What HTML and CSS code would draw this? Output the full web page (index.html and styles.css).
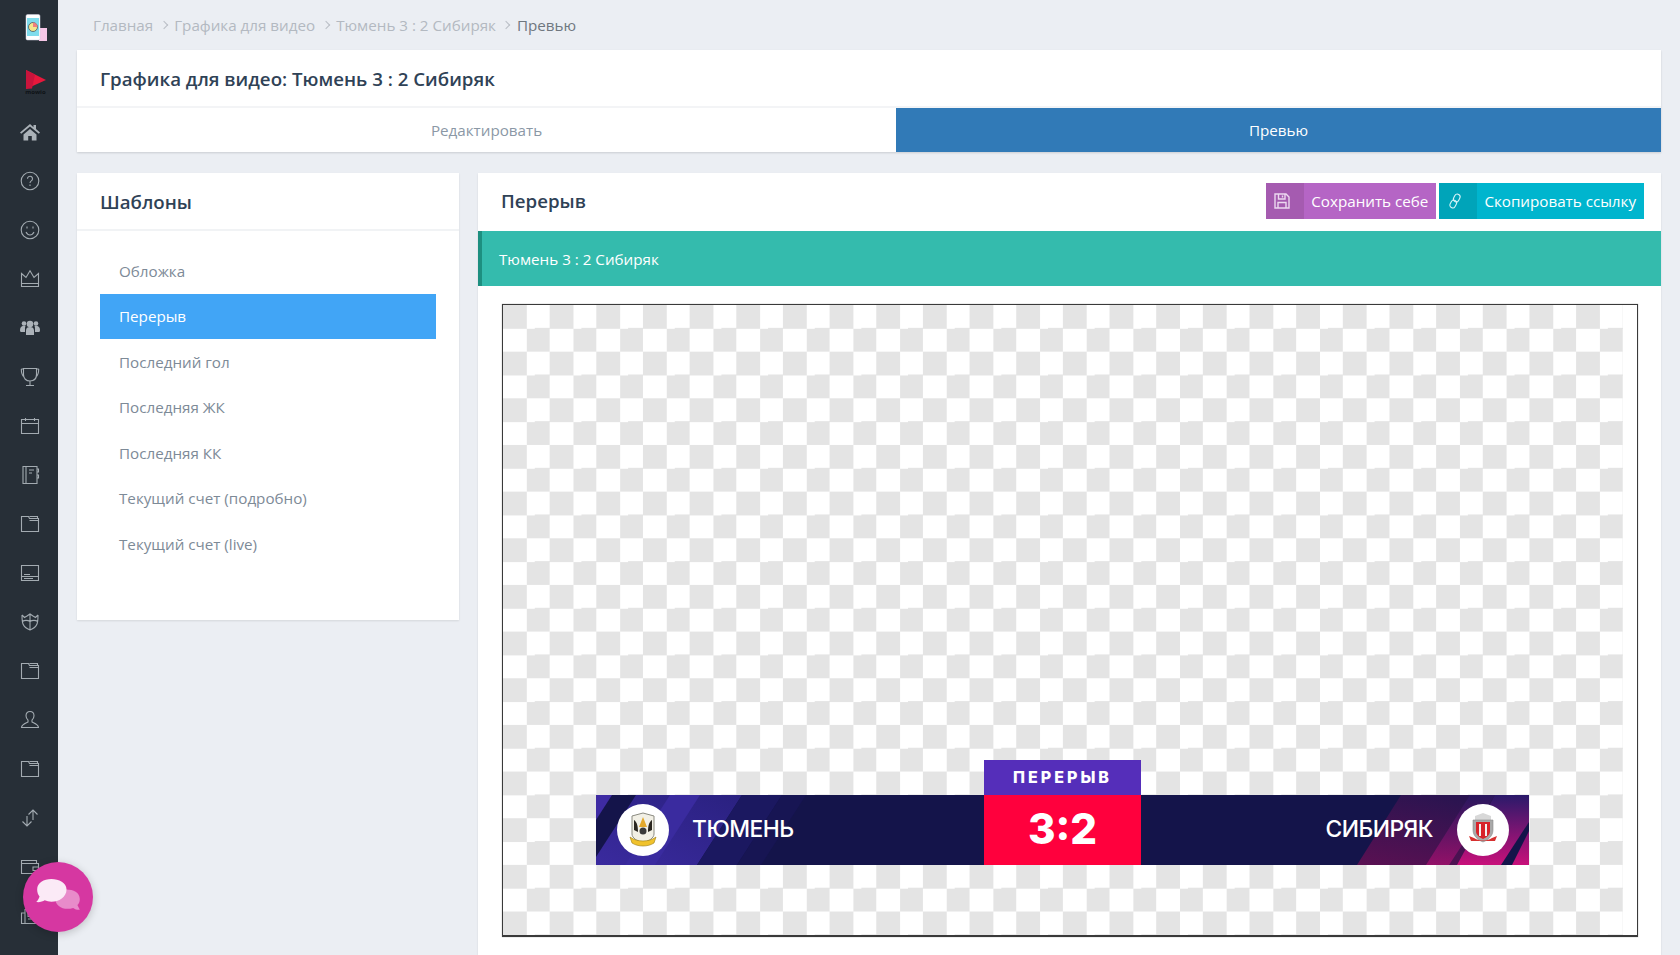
FILE: index.html
```html
<!DOCTYPE html>
<html lang="ru">
<head>
<meta charset="utf-8">
<title>Превью</title>
<link rel="stylesheet" href="styles.css">
</head>
<body>
<svg class="defs" width="0" height="0" aria-hidden="true">
  <symbol id="i-folder" viewBox="0 0 20 20"><path d="M1.500 2.500h7l1 2h9v13h-17zM9.500 2.500h8v2M9.500 6.500h9"/></symbol>
</svg>
<nav class="sidebar">
  <div class="logo-slot">
    <svg class="logo-phone" viewBox="0 0 22 27"><rect x="14" y="14" width="8" height="13" fill="#f5c6e6"/><rect x="1" y="0.500" width="14" height="25.500" rx="1.500" fill="#fff" stroke="#ccd" stroke-width=".5"/><rect x="2" y="4" width="12" height="18" fill="#7fdcec"/><circle cx="8" cy="13" r="4.500" fill="#f4e58c" stroke="#456" stroke-width=".8"/><path d="M8 13V8.500a4.500 4.500 0 0 1 4.500 4.500z" fill="#ef7f7f"/></svg>
  </div>
  <div class="logo-slot logo-mowio">
    <svg class="logo-play" viewBox="0 0 20 19"><path d="M0 0l20 10-20 9z" fill="#e8183c"/><path d="M0 0l9 4.500-3 14-6 .5z" fill="#c9143c"/></svg>
    <span class="mowio-text">mowio</span>
  </div>
  <div class="nav-item"><svg viewBox="0 0 20 20" class="solid"><path d="M10 2L0 10.500l1.200 1.300L10 4.500l8.800 7.300 1.200-1.300-4-3.400V3h-2.500v2.300zM3.500 12.500V18.500h4.700v-4.500h3.600v4.500h4.700v-6L10 7z"/></svg></div>
  <div class="nav-item"><svg viewBox="0 0 20 20"><circle cx="10" cy="10" r="8.800"/><path d="M7.500 7.800a2.500 2.500 0 1 1 3.800 2.100c-.9.6-1.300 1-1.300 2.100M10 13.500v1.500"/></svg></div>
  <div class="nav-item"><svg viewBox="0 0 20 20"><circle cx="10" cy="10" r="8.800"/><path d="M6 12c1 2 2.500 3 4 3s3-1 4-3M7 6.500v2M13 6.500v2"/></svg></div>
  <div class="nav-item"><svg viewBox="0 0 20 20"><path d="M1.500 4.500l4.500 4L10 1.800l4 6.700 4.500-4v13h-17zM1.500 14.500h17"/></svg></div>
  <div class="nav-item"><svg viewBox="0 0 20 20" class="solid"><circle cx="4" cy="5.500" r="2.300"/><circle cx="16" cy="5.500" r="2.300"/><circle cx="10" cy="6" r="3.300"/><path d="M0 12c0-3 2-4.300 4-4.300.6 0 1 .1 1.500.3C5 9 5 10 5 11.500V14H1c-.7 0-1-.8-1-2zM20 12c0-3-2-4.300-4-4.300-.6 0-1 .1-1.500.3.500 1 .5 2 .5 3.500V14h4c.7 0 1-.8 1-2zM6 12.500c0-2.500 1.500-3.500 4-3.500s4 1 4 3.500V17H6z"/></svg></div>
  <div class="nav-item"><svg viewBox="0 0 20 20"><path d="M3.500 1.500h13v6c0 4-2.500 6.500-6.500 6.500s-6.500-2.500-6.500-6.500zM1.300 2h2.500M16.300 2h2.500M1.300 2c0 4 .7 6.500 3 8M18.700 2c0 4-.7 6.500-3 8M10 14v4M6 18.500h8"/></svg></div>
  <div class="nav-item"><svg viewBox="0 0 20 20"><path d="M1.500 3.500h17v14h-17zM1.500 7.500h17M5.500 2v3M14.500 2v3"/></svg></div>
  <div class="nav-item"><svg viewBox="0 0 20 20"><path d="M3 1.500h14v17H3zM6 1.500v17M9 5h5M9 8h3M17 4h1.500v3H17M17 10h1.500v3H17"/></svg></div>
  <div class="nav-item"><svg><use href="#i-folder"/></svg></div>
  <div class="nav-item"><svg viewBox="0 0 20 20"><path d="M1.500 2.500h17v15h-17zM1.500 13.500h17M4 15.500h9M4 11.500h6"/></svg></div>
  <div class="nav-item"><svg viewBox="0 0 20 20"><path d="M2 3c0 7 0 12 8 15 8-3 8-8 8-15M2 3l2.500 2.500L7 4l3-2 3 2 2.500 1.500L18 3M10 2v16M2.500 9.500C4 8 8 8 10 9.500c2-1.500 6-1.500 7.500 0"/></svg></div>
  <div class="nav-item"><svg><use href="#i-folder"/></svg></div>
  <div class="nav-item"><svg viewBox="0 0 20 20"><path d="M10 1.500c2.500 0 4 1.800 4 4.300 0 2-1 3.400-2 4.400v1.800c2 1 6.500 2.500 6.500 5.500h-17c0-3 4.500-4.500 6.500-5.500v-1.800c-1-1-2-2.400-2-4.400 0-2.500 1.500-4.300 4-4.300z"/></svg></div>
  <div class="nav-item"><svg><use href="#i-folder"/></svg></div>
  <div class="nav-item"><svg viewBox="0 0 20 20"><path d="M7 8v10M2.500 13.500L7 18l4.500-4.500M13 12V2M8.500 6.500L13 2l4.500 4.500"/></svg></div>
  <div class="nav-item"><svg viewBox="0 0 20 20"><path d="M1.500 3.500h15v3h2v10h-17zM1.500 6.500h15M13 10h5.500v3.500H13z"/></svg></div>
  <div class="nav-item"><svg viewBox="0 0 20 20"><path d="M5 3.500h13.500v14H1.500V7H5zM5 7v10M8 6.500h7.500v4H8zM8 13h8"/></svg></div>
</nav>
<button class="chat" type="button" aria-label="Чат">
  <svg viewBox="0 0 46 38"><path d="M20 20c0-6 6-9 12-9 7 0 14 3 14 10 0 3-1 5-2.500 6.500l2.500 5c-2 .3-5-.3-7-2-2 .7-4 1-6 1-7 0-13-4-13-11.500z" fill="#e88bca"/><path d="M1 11C1 4 8 0 16 0s16 4 16 11c0 8-8 13-16 13-2.500 0-5-.5-7-1.500-2 1.500-6 2.300-9 1.800 1.500-1.300 3-3.500 3.500-5.800C2 16.500 1 14 1 11z" fill="#fbeaf6"/></svg>
</button>
<main class="main">
  <ol class="crumbs">
    <li>Главная</li>
    <li class="sep"></li>
    <li>Графика для видео</li>
    <li class="sep"></li>
    <li>Тюмень 3 : 2 Сибиряк</li>
    <li class="sep"></li>
    <li class="current">Превью</li>
  </ol>
  <section class="head-card">
    <h1 class="title">Графика для видео: Тюмень 3 : 2 Сибиряк</h1>
    <div class="tabs">
      <a class="tab">Редактировать</a>
      <a class="tab tab-active">Превью</a>
    </div>
  </section>
  <div class="columns">
    <aside class="card templates">
      <h2 class="card-title templates-title">Шаблоны</h2>
      <ul class="tpl-list">
        <li class="tpl">Обложка</li>
        <li class="tpl tpl-active">Перерыв</li>
        <li class="tpl">Последний гол</li>
        <li class="tpl">Последняя ЖК</li>
        <li class="tpl">Последняя КК</li>
        <li class="tpl">Текущий счет (подробно)</li>
        <li class="tpl">Текущий счет (live)</li>
      </ul>
    </aside>
    <section class="card preview">
      <header class="preview-head">
        <h2 class="card-title">Перерыв</h2>
        <div class="actions">
          <a class="btn btn-purple">
            <span class="btn-icon"><svg viewBox="0 0 16 16"><path d="M1 1h11l3 3v11H1zM4.500 1v5h6.500V1M8.500 2.500v2M4 15V9.500h8V15"/></svg></span>
            <span class="btn-text">Сохранить себе</span>
          </a>
          <a class="btn btn-teal">
            <span class="btn-icon"><svg class="link-icon" viewBox="0 0 16 16"><rect x="7" y="1" width="5.500" height="8" rx="2.750" transform="rotate(28 9.750 5)"/><rect x="3.500" y="7" width="5.500" height="8" rx="2.750" transform="rotate(28 6.250 11)"/></svg></span>
            <span class="btn-text">Скопировать ссылку</span>
          </a>
        </div>
      </header>
      <div class="alert">Тюмень 3 : 2 Сибиряк</div>
      <div class="frame">
        <div class="canvas">
          <div class="label">ПЕРЕРЫВ</div>
          <div class="scorebar">
            <div class="team">
              <svg class="team-bg" viewBox="0 0 388 70" preserveAspectRatio="none">
                <defs>
                  <linearGradient id="lg" x1="0" y1="1" x2="1" y2="0"><stop offset="0" stop-color="#3a2a9e"/><stop offset="1" stop-color="#2a2180"/></linearGradient>
                </defs>
                <path d="M0 0h16L0 25z" fill="#3e2ba3"/>
                <path d="M40 0h106l-45 70H0v-8z" fill="url(#lg)"/>
                <path d="M74 0h30L59 70H29z" fill="#3a2b9f"/>
                <path d="M146 0h40l-45 70h-40z" fill="#1b1860"/>
                <path d="M186 0h24l-45 70h-24z" fill="#171553"/>
              </svg>
              <span class="crest">
                <svg viewBox="0 0 30 36"><path d="M4 4l11-3 11 3v18c0 4-5 7-11 9-6-2-11-5-11-9z" fill="#f2f0e6" stroke="#8a8a80" stroke-width="1"/><path d="M6 8c3 2 4 6 4 12l-4-2zM24 8c-3 2-4 6-4 12l4-2z" fill="#2a2620"/><path d="M15 5l4 10h-8z" fill="#e3a92d"/><circle cx="15" cy="19" r="3.500" fill="#3a3a3a"/><path d="M2 25c4 3 9 4 13 4s9-1 13-4l-2 6c-3 2-7 3-11 3s-8-1-11-3z" fill="#f0c22c" stroke="#9a7a10" stroke-width=".6"/></svg>
              </span>
              <span class="team-name">ТЮМЕНЬ</span>
            </div>
            <div class="score">3:2</div>
            <div class="team team-right">
              <svg class="team-bg" viewBox="0 0 388 70" preserveAspectRatio="none">
                <defs>
                  <linearGradient id="rg" x1="0" y1="1" x2="0.500" y2="0"><stop offset="0" stop-color="#5a1052"/><stop offset="1" stop-color="#2a1450"/></linearGradient>
                  <linearGradient id="rm" x1="0" y1="1" x2="0" y2="0"><stop offset="0" stop-color="#c8107a"/><stop offset="1" stop-color="#2a1a6a"/></linearGradient>
                </defs>
                <path d="M260 0h128v70H216z" fill="url(#rg)"/>
                <path d="M329 0h25l-46 70h-23z" fill="url(#rm)" opacity=".55"/>
                <path d="M354 0h34v70h-72z" fill="url(#rm)"/>
                <path d="M388 27v9l-17 34h-11z" fill="#14144a"/>
              </svg>
              <span class="team-name">СИБИРЯК</span>
              <span class="crest">
                <svg viewBox="0 0 30 36"><path d="M7 4l8-3 8 3v4H7z" fill="#d8d8d8"/><path d="M5 8h20v10c0 6-5 10-10 12C10 28 5 24 5 18z" fill="#a9a9a9" stroke="#8c8c8c" stroke-width=".6"/><path d="M8 10h14v9c0 4-3 6-7 8-4-2-7-4-7-8z" fill="#d8232a"/><path d="M11 12h2v12h-2zM17 12h2v12h-2z" fill="#f3f3f3"/><path d="M1 24l5 2c3 2 6 2.500 9 2.500s6-.5 9-2.500l5-2-2 5H3z" fill="#d6302f"/></svg>
              </span>
            </div>
          </div>
        </div>
      </div>
    </section>
  </div>
</main>
</body>
</html>
```

FILE: styles.css
```css
* { box-sizing: border-box; }
html, body { margin: 0; height: 955px; overflow: hidden; }
body {
  display: flex;
  position: relative;
  background: #ebeef3;
  font-family: "Open Sans", "Noto Sans", sans-serif;
  font-size: 15.2px;
  color: #2f4256;
}
.defs { position: absolute; }

/* sidebar */
.sidebar {
  flex: 0 0 58px;
  height: 955px;
  overflow: hidden;
  background: #272f37;
  padding-left: 2px;
  display: flex;
  flex-direction: column;
  align-items: center;
}
.logo-slot {
  flex: 0 0 54px;
  width: 100%;
  padding-left: 11px;
  display: flex;
  flex-direction: column;
  align-items: center;
  justify-content: center;
}
.logo-phone { width: 22px; height: 27px; }
.logo-play { width: 20px; height: 19px; margin-top: 4px; }
.mowio-text {
  font-size: 6px;
  font-weight: 700;
  line-height: 7px;
  color: #0e1216;
}
.nav-item {
  flex: 0 0 49px;
  display: flex;
  align-items: center;
  justify-content: center;
  padding-bottom: 1px;
}
.nav-item svg {
  width: 20px;
  height: 20px;
  fill: none;
  stroke: #a3abb1;
  stroke-width: 1.1;
}
.nav-item svg.solid { fill: #abb2b8; stroke: none; }

/* chat */
.chat {
  position: absolute;
  left: 23px;
  top: 862px;
  width: 70px;
  height: 70px;
  border: 0;
  border-radius: 50%;
  padding: 0;
  background: #d637a1;
  box-shadow: 0 2px 8px rgba(0, 0, 0, .2);
  display: flex;
  align-items: center;
  justify-content: center;
}
.chat svg { width: 44px; height: 36px; }

/* main */
.main {
  flex: 1;
  min-width: 0;
  padding: 0 19px;
}
.crumbs {
  list-style: none;
  margin: 0;
  padding: 0 0 0 16px;
  height: 50px;
  display: flex;
  align-items: center;
  gap: 7.500px;
  color: #b3b9c1;
}
.crumbs .sep {
  width: 6px;
  height: 6px;
  border-top: 1px solid #b9bec5;
  border-right: 1px solid #b9bec5;
  transform: rotate(45deg);
}
.crumbs .current { color: #6f777f; }

.head-card {
  background: #fff;
  box-shadow: 0 1px 2px rgba(0, 0, 0, .14);
}
.title {
  margin: 0;
  height: 58px;
  padding-left: 23px;
  display: flex;
  align-items: center;
  border-bottom: 2px solid #f3f4f6;
  font-size: 18.7px;
  font-weight: 600;
  color: #2f4256;
}
.tabs { display: flex; height: 44px; }
.tab {
  display: flex;
  align-items: center;
  justify-content: center;
  color: #8b98a6;
}
.tab:first-child { flex: 0 0 819px; }
.tab-active { flex: 1; background: #317ab7; color: #fff; }

.columns {
  margin-top: 21px;
  display: flex;
  align-items: flex-start;
  gap: 19px;
}
.card {
  background: #fff;
  box-shadow: 0 1px 2px rgba(0, 0, 0, .1);
}
.card-title {
  margin: 0;
  font-size: 18.7px;
  font-weight: 600;
  color: #2f4256;
}
.templates { flex: 0 0 382px; height: 447px; }
.templates-title {
  height: 58px;
  padding-left: 23px;
  display: flex;
  align-items: center;
  border-bottom: 2px solid #f1f3f5;
}
.tpl-list {
  list-style: none;
  margin: 0;
  padding: 17px 23px 0;
}
.tpl {
  height: 45.500px;
  padding-left: 19px;
  display: flex;
  align-items: center;
  color: #7d8a97;
}
.tpl-active { background: #41a5f6; color: #fff; }

.preview { flex: 1; min-width: 0; height: 782px; }
.preview-head {
  height: 58px;
  padding: 10px 17px 0 23px;
  display: flex;
  align-items: flex-start;
  justify-content: space-between;
}
.preview-head .card-title { line-height: 36px; }
.actions { display: flex; gap: 3px; }
.btn {
  height: 36px;
  display: flex;
  align-items: stretch;
  color: #fff;
}
.btn-icon {
  flex: 0 0 38px;
  padding-right: 6px;
  display: flex;
  align-items: center;
  justify-content: center;
}
.btn-icon svg {
  width: 16px;
  height: 16px;
  fill: none;
  stroke: #ecd8f0;
  stroke-width: 1.4;
}
.btn-text {
  padding: 0 8px 0 7px;
  display: flex;
  align-items: center;
}
.btn-purple { background: #b565c5; }
.btn-purple .btn-icon { background: #a55bb0; }
.btn-teal { background: #00b5ce; }
.btn-teal .btn-icon { background: #00a4b9; }
.btn-teal .btn-icon svg { stroke: #d8f4f8; stroke-width: 1.1; }

.alert {
  height: 55px;
  padding-left: 17px;
  display: flex;
  align-items: center;
  background: #34bbad;
  border-left: 4px solid #1d8f80;
  color: #fff;
}
.frame {
  margin: 18px 0 0 24px;
  width: 1136px;
  height: 633px;
  border: 1px solid #3a3a3a;
  border-width: 1px 1px 2px 1px;
  box-shadow: 0 0 1px rgba(0, 0, 0, .4);
}
.canvas {
  width: 1120px;
  height: 630px;
  padding: 455px 0 0 93px;
  background: conic-gradient(#fff 25%, #e4e4e4 0 50%, #fff 0 75%, #e4e4e4 0) 0 0 / 46.667px 46.667px;
}
.label {
  width: 157px;
  height: 35px;
  margin-left: 388px;
  padding-bottom: 2px;
  background: #552eba;
  color: #fff;
  display: flex;
  align-items: center;
  justify-content: center;
  font-family: Inter, sans-serif;
  font-size: 16px;
  font-weight: 800;
  letter-spacing: 3px;
}
.scorebar {
  width: 933px;
  height: 70px;
  display: flex;
  background: #14144a;
}
.team {
  position: relative;
  flex: 0 0 388px;
  display: flex;
  align-items: center;
  padding-left: 21px;
  gap: 23px;
  overflow: hidden;
}
.team-right { justify-content: flex-end; padding: 0 20px 0 0; gap: 24px; }
.team-bg {
  position: absolute;
  inset: 0;
  width: 100%;
  height: 100%;
}
.crest {
  position: relative;
  width: 52px;
  height: 52px;
  border-radius: 50%;
  background: #fff;
  display: flex;
  align-items: center;
  justify-content: center;
}
.crest svg { width: 30px; height: 36px; }
.team-name {
  position: relative;
  top: -2px;
  font-family: Inter, sans-serif;
  font-size: 22.8px;
  font-weight: 500;
  letter-spacing: -.5px;
  color: #fff;
}
.score {
  flex: 0 0 157px;
  padding-bottom: 3px;
  background: #ff003d;
  color: #fff;
  display: flex;
  align-items: center;
  justify-content: center;
  font-family: Inter, sans-serif;
  font-size: 42px;
  font-weight: 800;
}
```
